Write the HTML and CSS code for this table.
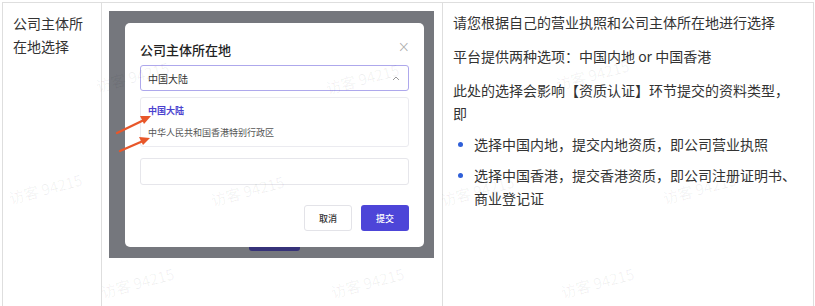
FILE: index.html
```html
<!DOCTYPE html>
<html lang="zh-CN">
<head>
    <meta charset="UTF-8">
    <meta name="viewport" content="width=device-width, initial-scale=1.0">
    <title>公司主体所在地选择</title>
    <link rel="stylesheet" href="styles.css">
</head>
<body>
    <div class="page">
        <table class="spec">
            <colgroup>
                <col class="col-name">
                <col class="col-shot">
                <col class="col-desc">
            </colgroup>
            <tr>
                <td class="cell-name">公司主体所在地选择</td>

                <!-- screenshot of the dialog -->
                <td class="cell-shot">
                    <div class="shot">
                        <div class="shot-btn"></div>
                        <div class="modal">
                            <div class="modal-head">
                                <span class="modal-title">公司主体所在地</span>
                                <span class="modal-close">&times;</span>
                            </div>
                            <div class="select">
                                <span>中国大陆</span>
                                <svg class="chevron" width="8" height="5" viewBox="0 0 8 5"><path d="M1 4 L4 1 L7 4" fill="none" stroke="#999" stroke-width="1"/></svg>
                            </div>
                            <div class="dropdown">
                                <div class="option active">中国大陆</div>
                                <div class="option">中华人民共和国香港特别行政区</div>
                            </div>
                            <div class="input"></div>
                            <div class="modal-foot">
                                <span class="mbtn mbtn-cancel">取消</span>
                                <span class="mbtn mbtn-ok">提交</span>
                            </div>
                        </div>
                        <svg class="arrows" width="325" height="247" viewBox="0 0 325 247">
                            <line x1="8" y1="122" x2="35" y2="109" stroke="#e8572a" stroke-width="2.4" stroke-linecap="round"/>
                            <polygon points="42,105 31,105 35,113" fill="#e8572a"/>
                            <line x1="11" y1="140" x2="34" y2="130" stroke="#e8572a" stroke-width="2.4" stroke-linecap="round"/>
                            <polygon points="41,127 30,126 34,134" fill="#e8572a"/>
                        </svg>
                    </div>
                </td>

                <td class="cell-desc">
                    <p>请您根据自己的营业执照和公司主体所在地进行选择</p>
                    <p>平台提供两种选项：中国内地 or 中国香港</p>
                    <p class="last">此处的选择会影响【资质认证】环节提交的资料类型，即</p>
                    <ul>
                        <li>选择中国内地，提交内地资质，即公司营业执照</li>
                        <li>选择中国香港，提交香港资质，即公司注册证明书、商业登记证</li>
                    </ul>
                </td>
            </tr>
        </table>

        <!-- visitor watermark -->
        <div class="watermarks">
            <span class="wm" style="left:95px;top:66px">访客 94215</span>
            <span class="wm" style="left:325px;top:68px">访客 94215</span>
            <span class="wm" style="left:555px;top:64px">访客 94215</span>
            <span class="wm" style="left:8px;top:178px">访客 94215</span>
            <span class="wm" style="left:210px;top:180px">访客 94215</span>
            <span class="wm" style="left:440px;top:180px">访客 94215</span>
            <span class="wm" style="left:662px;top:178px">访客 94215</span>
            <span class="wm" style="left:100px;top:272px">访客 94215</span>
            <span class="wm" style="left:330px;top:272px">访客 94215</span>
            <span class="wm" style="left:560px;top:272px">访客 94215</span>
        </div>
    </div>
</body>
</html>
```

FILE: styles.css
```css
body {
    margin: 0;
    background: #fff;
    font-family: "Noto Sans CJK SC", "Liberation Sans", sans-serif;
    color: #333;
    overflow: hidden;
}
.page {
    position: relative;
    padding: 2px;
    height: 302px;
}
.spec {
    border-collapse: collapse;
    table-layout: fixed;
    width: 811px;
}
.col-name { width: 99px; }
.col-shot { width: 341px; }
.col-desc { width: 371px; }
.spec td {
    border: 1px solid #dedede;
    vertical-align: top;
    height: 330px;
    font-size: 14px;
    line-height: 23px;
}
.cell-name {
    padding: 9px 10px;
}
.cell-shot {
    padding: 8px 7px;
}
.cell-desc {
    padding: 8px 12px 10px 10px;
    line-height: 22px;
}
.cell-desc p {
    margin: 0 0 11px;
}
.cell-desc p.last {
    margin-bottom: 8px;
}
.cell-desc ul {
    margin: 0;
    padding-left: 21px;
    list-style: none;
}
.cell-desc li {
    position: relative;
    margin-bottom: 8px;
}
.cell-desc li::before {
    content: "";
    position: absolute;
    left: -16px;
    top: 9px;
    width: 5px;
    height: 5px;
    border-radius: 50%;
    background: #2f5fd8;
}

/* screenshot */
.shot {
    position: relative;
    width: 325px;
    height: 247px;
    box-sizing: border-box;
    padding: 12px 10px 11px 16px;
    background: #75777d;
}
.shot-btn {
    position: absolute;
    left: 140px;
    top: 226px;
    width: 51px;
    height: 14px;
    border-radius: 3px;
    background: #363279;
}
.modal {
    position: relative;
    height: 224px;
    box-sizing: border-box;
    padding: 0 15px 16px;
    background: #fff;
    border-radius: 5px;
    display: flex;
    flex-direction: column;
}
.modal-head {
    display: flex;
    justify-content: space-between;
    align-items: center;
    padding-top: 17px;
    height: 19px;
    margin-bottom: 6px;
}
.modal-title {
    font-size: 13px;
    font-weight: 500;
    color: #222;
    line-height: 18px;
}
.modal-close {
    font-size: 15px;
    color: #aaa;
    line-height: 12px;
    margin-top: -6px;
    margin-right: -1px;
    font-family: "DejaVu Sans", sans-serif;
    font-weight: 300;
}
.select {
    height: 26px;
    box-sizing: border-box;
    border: 1px solid #aea8ec;
    border-radius: 3px;
    display: flex;
    align-items: center;
    justify-content: space-between;
    padding: 0 8px 0 7px;
    font-size: 10px;
    color: #333;
}
.dropdown {
    margin-top: 6px;
    height: 50px;
    box-sizing: border-box;
    border: 1px solid #ebebf0;
    border-radius: 3px;
    padding: 2px 7px 0;
}
.option {
    font-size: 9px;
    line-height: 22px;
    color: #555;
}
.option.active {
    color: #4b42cf;
    font-weight: 700;
}
.input {
    margin-top: 11px;
    height: 27px;
    box-sizing: border-box;
    border: 1px solid #e6e6eb;
    border-radius: 3px;
}
.modal-foot {
    margin-top: auto;
    display: flex;
    justify-content: flex-end;
    gap: 9px;
}
.mbtn {
    width: 48px;
    height: 26px;
    box-sizing: border-box;
    border-radius: 3px;
    font-size: 9px;
    font-weight: 500;
    display: flex;
    align-items: center;
    justify-content: center;
}
.mbtn-cancel {
    border: 1px solid #e3e3e8;
    color: #333;
}
.mbtn-ok {
    background: #4d45d8;
    color: #fff;
}
.arrows {
    position: absolute;
    left: 0;
    top: 0;
}

/* watermark */
.watermarks {
    position: absolute;
    inset: 0;
    pointer-events: none;
}
.wm {
    position: absolute;
    font-size: 15px;
    color: rgba(0, 0, 0, 0.06);
    white-space: nowrap;
    transform: rotate(-15deg);
}
```
